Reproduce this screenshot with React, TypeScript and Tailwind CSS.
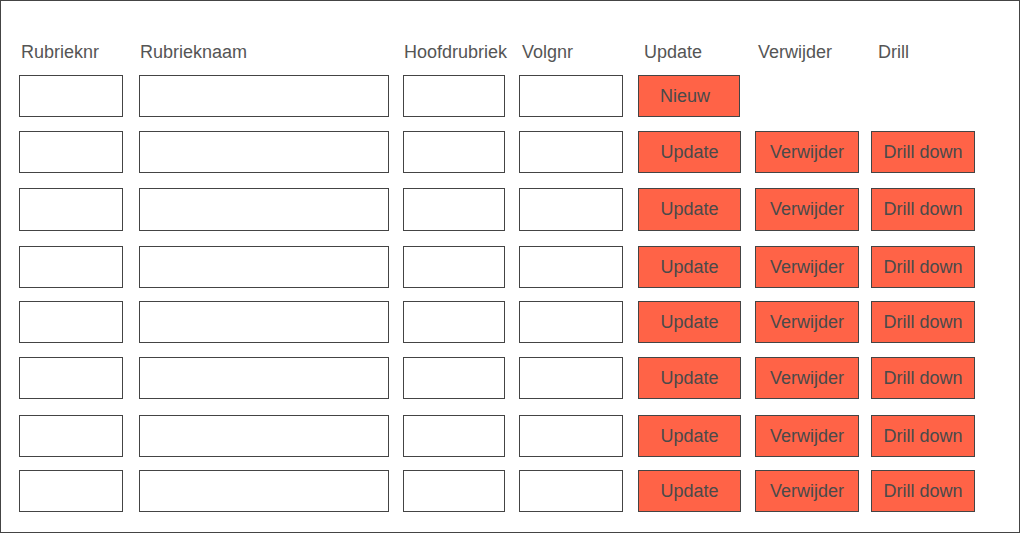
import React from 'react'

const cols = [
  { label: 'Rubrieknr', cell: 'ml-[18px] w-[104px]', head: 'pl-[2px]' },
  { label: 'Rubrieknaam', cell: 'ml-[16px] w-[250px]', head: 'pl-[1px]' },
  { label: 'Hoofdrubriek', cell: 'ml-[14px] w-[102px]', head: 'pl-[1px]' },
  { label: 'Volgnr', cell: 'ml-[14px] w-[104px]', head: 'pl-[3px]' },
  { label: 'Update', cell: 'ml-[15px] w-[103px]', head: 'pl-[6px]' },
  { label: 'Verwijder', cell: 'ml-[14px] w-[104px]', head: 'pl-[3px]' },
  { label: 'Drill', cell: 'ml-[12px] w-[104px]', head: 'pl-[7px]' },
]

// gap above each data row, and its height
const rows = [
  { gap: 'mt-[14px]', h: 'h-[42px]' },
  { gap: 'mt-[15px]', h: 'h-[43px]' },
  { gap: 'mt-[15px]', h: 'h-[42px]' },
  { gap: 'mt-[13px]', h: 'h-[42px]' },
  { gap: 'mt-[14px]', h: 'h-[42px]' },
  { gap: 'mt-[16px]', h: 'h-[42px]' },
  { gap: 'mt-[13px]', h: 'h-[42px]' },
]

function Field({ className }: { className: string }) {
  return <div className={`${className} h-full border border-[#444] bg-white shrink-0`} />
}

function Btn({ className, children }: { className: string; children: React.ReactNode }) {
  return (
    <button className={`${className} h-full shrink-0 border border-[#444] bg-[#ff6347] text-[18px] text-[#4a4a4a] flex items-center justify-center`}>
      {children}
    </button>
  )
}

export default function App() {
  return (
    <div
      className="w-[1020px] h-[533px] border border-[#444] bg-white"
      style={{ fontFamily: '"Liberation Sans", Arial, sans-serif' }}
    >
      {/* header */}
      <div className="flex pt-[39px] h-[74px]">
        {cols.map((c) => (
          <div key={c.label} className={`${c.cell} ${c.head} shrink-0 text-[18px] leading-[24px] text-[#555] whitespace-nowrap`}>
            {c.label}
          </div>
        ))}
      </div>

      {/* new row */}
      <div className="flex h-[42px]">
        <Field className={cols[0].cell} />
        <Field className={cols[1].cell} />
        <Field className={cols[2].cell} />
        <Field className={cols[3].cell} />
        <Btn className="ml-[15px] w-[102px] pr-[8px]">Nieuw</Btn>
      </div>

      {rows.map((r, i) => (
        <div key={i} className={`flex ${r.gap} ${r.h}`}>
          <Field className={cols[0].cell} />
          <Field className={cols[1].cell} />
          <Field className={cols[2].cell} />
          <Field className={cols[3].cell} />
          <Btn className={cols[4].cell}>Update</Btn>
          <Btn className={cols[5].cell}>Verwijder</Btn>
          <Btn className={cols[6].cell}>Drill down</Btn>
        </div>
      ))}
    </div>
  )
}
